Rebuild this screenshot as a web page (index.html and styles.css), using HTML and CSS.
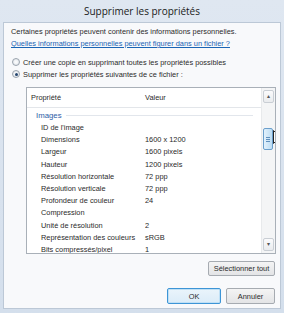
FILE: index.html
```html
<!DOCTYPE html>
<html lang="fr">
<head>
    <meta charset="UTF-8">
    <title>Supprimer les propriétés</title>
    <link rel="stylesheet" href="styles.css">
</head>
<body>
    <div class="window">
        <div class="titlebar">Supprimer les propriétés</div>
        <div class="client">
            <p class="intro">Certaines propriétés peuvent contenir des informations personnelles.</p>
            <a class="link" href="#">Quelles informations personnelles peuvent figurer dans un fichier ?</a>

            <label class="option option-first"><span class="radio"></span>Créer une copie en supprimant toutes les propriétés possibles</label>
            <label class="option"><span class="radio checked"></span>Supprimer les propriétés suivantes de ce fichier :</label>

            <div class="listbox">
                <div class="list">
                    <div class="list-head">
                        <span class="col-name">Propriété</span>
                        <span class="col-value">Valeur</span>
                    </div>
                    <div class="group"><span>Images</span><i></i></div>
                    <div class="row"><span class="col-name">ID de l'image</span><span class="col-value"></span></div>
                    <div class="row"><span class="col-name">Dimensions</span><span class="col-value">1600 x 1200</span></div>
                    <div class="row"><span class="col-name">Largeur</span><span class="col-value">1600 pixels</span></div>
                    <div class="row"><span class="col-name">Hauteur</span><span class="col-value">1200 pixels</span></div>
                    <div class="row"><span class="col-name">Résolution horizontale</span><span class="col-value">72 ppp</span></div>
                    <div class="row"><span class="col-name">Résolution verticale</span><span class="col-value">72 ppp</span></div>
                    <div class="row"><span class="col-name">Profondeur de couleur</span><span class="col-value">24</span></div>
                    <div class="row"><span class="col-name">Compression</span><span class="col-value"></span></div>
                    <div class="row"><span class="col-name">Unité de résolution</span><span class="col-value">2</span></div>
                    <div class="row"><span class="col-name">Représentation des couleurs</span><span class="col-value">sRGB</span></div>
                    <div class="row"><span class="col-name">Bits compressés/pixel</span><span class="col-value">1</span></div>
                </div>
                <div class="scrollbar">
                    <div class="arrow">▴</div>
                    <div class="track">
                        <div class="thumb"><b></b><b></b><b></b></div>
                    </div>
                    <div class="arrow">▾</div>
                </div>
                <svg class="cursor" width="11" height="17" viewBox="0 0 11 17">
                    <path d="M0.5 0.5 L0.5 13.5 L3.5 10.5 L5.8 15.8 L7.6 15 L5.4 9.8 L9.6 9.8 Z" fill="#fff" stroke="#222" stroke-width="1"/>
                </svg>
            </div>

            <div class="select-row">
                <div class="btn btn-wide">Sélectionner tout</div>
            </div>
            <div class="actions">
                <div class="btn btn-default">OK</div>
                <div class="btn">Annuler</div>
            </div>
        </div>
    </div>
</body>
</html>
```

FILE: styles.css
```css
* {
    box-sizing: border-box;
    margin: 0;
    padding: 0;
}

body {
    background-color: #d9e3ef;
    font-family: "Liberation Sans", Arial, sans-serif;
    color: #2a2a2a;
}

.window {
    width: 284px;
    height: 313px;
    display: flex;
    flex-direction: column;
    background: linear-gradient(#dfe7f1, #d4dfec);
    padding: 0 3px 4px 3px;
}

.titlebar {
    height: 22px;
    line-height: 23px;
    text-align: center;
    font-family: "Open Sans", sans-serif;
    font-size: 10px;
    color: #1a1a1a;
}

.client {
    flex: 1;
    background-color: #f8f9fb;
    border: 1px solid #bcc8d6;
    padding: 3px 4px 0 7px;
    display: flex;
    flex-direction: column;
    font-size: 7.4px;
}

.intro {
    line-height: 12px;
}

.link {
    line-height: 12px;
    color: #1a64b4;
    text-decoration: underline;
    align-self: flex-start;
}

.option {
    display: flex;
    align-items: center;
    height: 12px;
    padding-left: 1px;
}

.option-first {
    margin-top: 6px;
}

.radio {
    width: 8px;
    height: 8px;
    border: 1px solid #9aa3ad;
    border-radius: 50%;
    background: radial-gradient(#ffffff, #dde2e8);
    margin-right: 3px;
    position: relative;
}

.radio.checked::after {
    content: "";
    position: absolute;
    left: 1.5px;
    top: 1.5px;
    width: 3px;
    height: 3px;
    border-radius: 50%;
    background-color: #24456e;
}

.listbox {
    position: relative;
    margin: 7px 0 0 15px;
    height: 167px;
    border: 1px solid #a9b0b8;
    background-color: #fff;
    display: flex;
    overflow: hidden;
}

.list {
    flex: 1;
}

.list-head {
    display: flex;
    height: 20px;
    align-items: center;
    border-bottom: 1px solid #e3e6ea;
    padding-left: 4px;
}

.list-head .col-name {
    width: 114px;
    flex: none;
}

.row {
    display: flex;
    height: 12.2px;
    line-height: 12.2px;
    padding-left: 14px;
}

.row .col-name {
    width: 104px;
    flex: none;
}

.group {
    display: flex;
    align-items: center;
    height: 14px;
    padding-left: 9px;
    color: #2c5ea8;
    font-size: 7.8px;
}

.group i {
    flex: 1;
    height: 1px;
    background-color: #e2e6ec;
    margin: 1px 8px 0 4px;
}

.scrollbar {
    width: 14px;
    border-left: 1px solid #e8eaec;
    background-color: #f4f5f6;
    display: flex;
    flex-direction: column;
    padding: 2px 1px;
}

.arrow {
    height: 13px;
    border: 1px solid #c9ced4;
    border-radius: 2px;
    background: linear-gradient(#fbfbfc, #e9ebee);
    font-size: 6px;
    line-height: 11px;
    text-align: center;
    color: #555;
}

.track {
    flex: 1;
    padding-top: 25px;
}

.thumb {
    height: 22px;
    width: 10px;
    border: 1px solid #6b9fcc;
    border-radius: 2px;
    background: linear-gradient(90deg, #e2f1fc, #bcdcf3);
    display: flex;
    flex-direction: column;
    justify-content: center;
    gap: 1px;
    padding-left: 2px;
}

.thumb b {
    display: block;
    width: 4px;
    height: 1px;
    background-color: #5f8fbd;
}

.cursor {
    position: absolute;
    left: 246px;
    top: 42px;
}

.select-row {
    display: flex;
    justify-content: flex-end;
    margin-top: 7px;
    padding-right: 1px;
}

.actions {
    display: flex;
    justify-content: flex-end;
    gap: 5px;
    margin-top: 12px;
    padding-right: 1px;
}

.btn {
    flex: none;
    height: 15px;
    display: flex;
    align-items: center;
    justify-content: center;
    border: 1px solid #a6abb1;
    border-radius: 2px;
    background: linear-gradient(#f4f4f4, #e3e4e6);
    font-size: 7.4px;
    color: #2a2a2a;
}

.btn-wide {
    width: 67px;
}

.actions .btn {
    width: 49px;
    height: 16px;
}

.actions .btn-default {
    width: 54px;
    border-color: #3d95d6;
    background: linear-gradient(#eaf4fb, #dbecf8);
    box-shadow: inset 0 0 0 1px #bfe0f6;
}
```
